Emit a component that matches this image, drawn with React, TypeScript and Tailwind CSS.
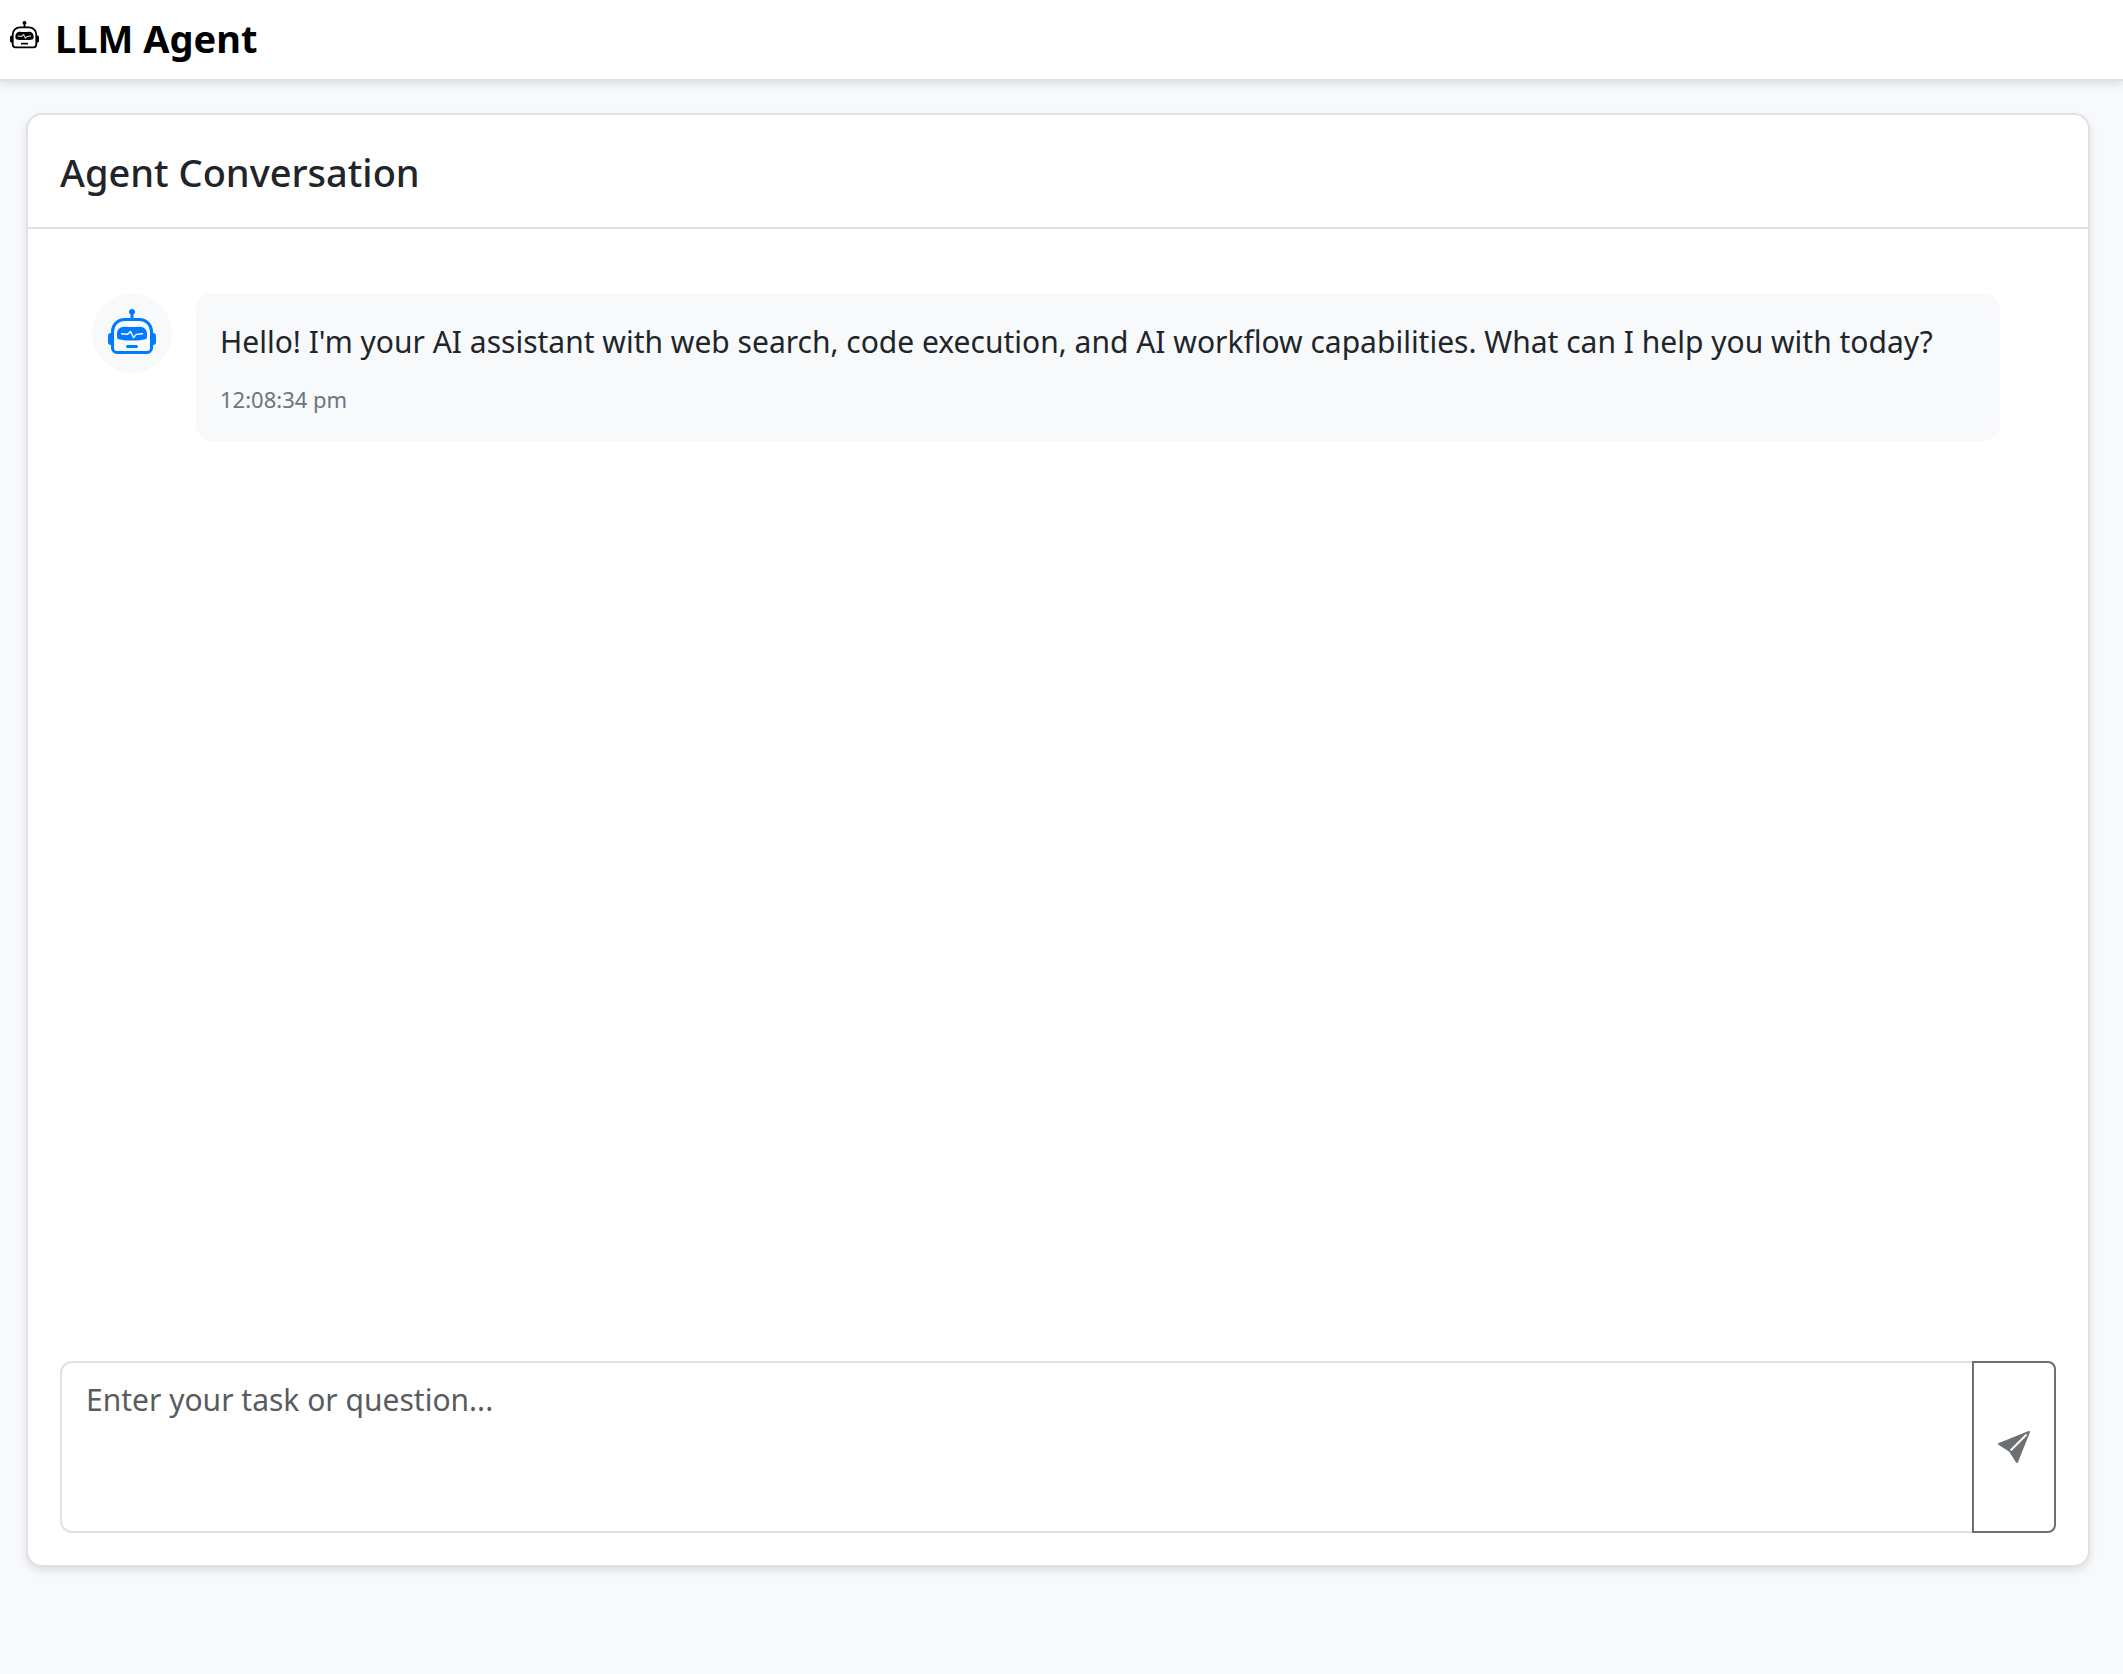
import { useState } from "react";
import { BsRobot, BsSendFill } from "react-icons/bs";

interface Message {
  id: number;
  text: string;
  time: string;
}

const messages: Message[] = [
  {
    id: 1,
    text: "Hello! I'm your AI assistant with web search, code execution, and AI workflow capabilities. What can I help you with today?",
    time: "12:08:34 pm",
  },
];

function Header() {
  return (
    <header className="flex h-[81px] shrink-0 items-center gap-4 border-b-2 border-[#dee2e6] bg-white px-[10px] pb-1 shadow-[0_4px_8px_rgba(0,0,0,0.1)]">
      <BsRobot className="mb-1 size-[29px] text-black" />
      <span className="text-[38px] leading-[60px] font-bold text-black">
        LLM Agent
      </span>
    </header>
  );
}

function AgentMessage({ message }: { message: Message }) {
  return (
    <div className="flex items-start">
      <div className="flex size-20 shrink-0 items-center justify-center rounded-full bg-[#f8f9fa]">
        <BsRobot className="size-12 text-[#007bff]" />
      </div>
      <div className="mx-6 flex-1 rounded-2xl bg-[#f8f9fb] p-6">
        <p className="text-[30px] leading-[50px] text-[#212529]">
          {message.text}
        </p>
        <time className="mt-[14px] block text-[22px] leading-[36px] text-[#6c757d]">
          {message.time}
        </time>
      </div>
    </div>
  );
}

function TaskForm() {
  const [task, setTask] = useState("");

  return (
    <form
      className="flex h-[172px]"
      onSubmit={(e) => {
        e.preventDefault();
        setTask("");
      }}
    >
      <textarea
        aria-label="Task or question"
        placeholder="Enter your task or question..."
        value={task}
        onChange={(e) => setTask(e.target.value)}
        className="min-w-0 flex-1 resize-none rounded-l-xl border-2 border-r-0 border-[#dee2e6] bg-white px-6 py-3 text-[30px] leading-[50px] text-[#212529] outline-none placeholder:text-[#595c5f]"
      />
      <button
        type="submit"
        aria-label="Send"
        className="flex w-[84px] shrink-0 items-center justify-center rounded-r-lg border-2 border-[#6c7073] bg-white text-[#6c7073]"
      >
        <BsSendFill className="size-8" />
      </button>
    </form>
  );
}

export default function App() {
  return (
    <div className="flex min-h-screen flex-col bg-[#f8f9fb] font-['Noto_Sans','Open_Sans',sans-serif]">
      <Header />
      <main className="flex flex-1 flex-col pt-8 pr-[33px] pb-[107px] pl-[26px]">
        <section className="flex flex-1 flex-col rounded-2xl border-2 border-[#dee2e6] bg-white shadow-[0_4px_8px_rgba(0,0,0,0.1)]">
          <div className="border-b-2 border-[#dee2e6] px-8 pt-7 pb-[26px]">
            <h1 className="text-[38px] leading-[58px] font-medium text-[#212529]">
              Agent Conversation
            </h1>
          </div>
          <div className="flex flex-1 flex-col p-8">
            <div className="flex-1 p-8">
              {messages.map((message) => (
                <AgentMessage key={message.id} message={message} />
              ))}
            </div>
            <TaskForm />
          </div>
        </section>
      </main>
    </div>
  );
}
